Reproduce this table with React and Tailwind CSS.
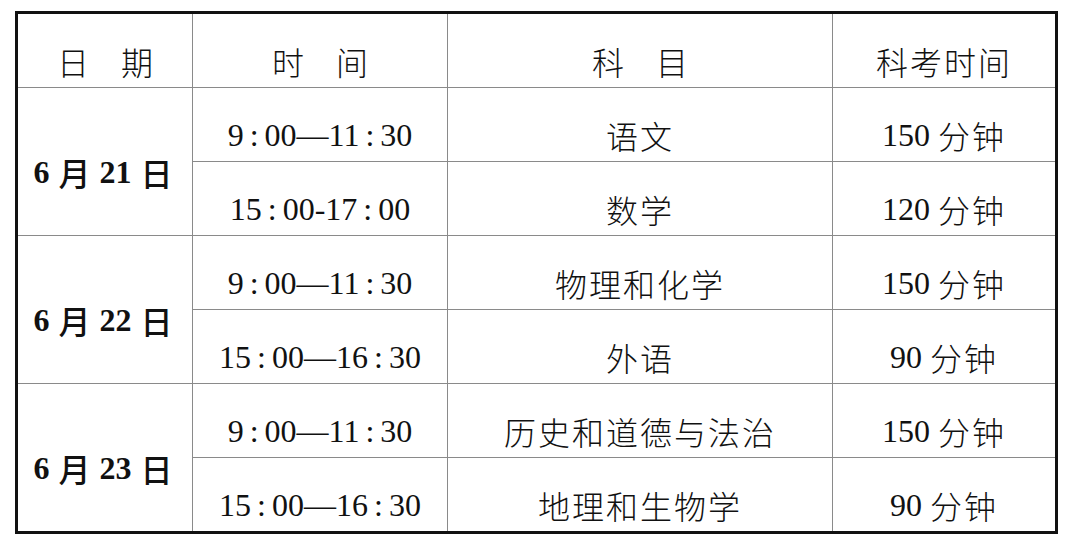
const SERIF = "font-['Liberation_Serif','Noto_Sans_CJK_SC',serif]";
const CJK = "font-['Noto_Sans_CJK_SC',sans-serif]";

const rows = [
  {
    day: '21',
    items: [
      { time: '9:00—11:30', subject: '语文', len: '150' },
      { time: '15:00-17:00', subject: '数学', len: '120' },
    ],
  },
  {
    day: '22',
    items: [
      { time: '9:00—11:30', subject: '物理和化学', len: '150' },
      { time: '15:00—16:30', subject: '外语', len: '90' },
    ],
  },
  {
    day: '23',
    items: [
      { time: '9:00—11:30', subject: '历史和道德与法治', len: '150' },
      { time: '15:00—16:30', subject: '地理和生物学', len: '90' },
    ],
  },
];

// 冒号在原图里比 Times 的宽，单独加点间距
function Time({ value }) {
  const parts = value.split(':');
  return (
    <span>
      {parts.map((p, i) => (
        <span key={i}>
          {i > 0 && <span className="mx-[6px]">:</span>}
          {p}
        </span>
      ))}
    </span>
  );
}

function Cell({ children, className = '' }) {
  return (
    <div className={`bg-white flex items-center justify-center pt-[20px] text-[32px] leading-none text-[#111] ${className}`}>
      {children}
    </div>
  );
}

export default function App() {
  return (
    <div className={`w-[1080px] h-[550px] bg-white pt-[11px] pl-[15px] ${SERIF}`}>
      <div className="w-[1043px] border-[3px] border-[#111] bg-[#8a8a8a] grid grid-cols-[174px_254px_384px_222px] grid-rows-[73px_repeat(6,73px)] gap-px">
        <Cell className={`${CJK} font-light`}>日　期</Cell>
        <Cell className={`${CJK} font-light`}>时　间</Cell>
        <Cell className={`${CJK} font-light`}>科　目</Cell>
        <Cell className={`${CJK} font-light tracking-[2px]`}>科考时间</Cell>
        {rows.map((r) => (
          <div key={r.day} className="contents">
            <Cell className="row-span-2 pr-[4px]">
              <span className="font-bold">6</span>
              <span className={`${CJK} font-medium mx-[9px]`}>月</span>
              <span className="font-bold">{r.day}</span>
              <span className={`${CJK} font-medium ml-[9px]`}>日</span>
            </Cell>
            {r.items.map((it) => (
              <div key={it.time + it.subject} className="contents">
                <Cell>
                  <Time value={it.time} />
                </Cell>
                <Cell className={`${CJK} font-light tracking-[2px]`}>{it.subject}</Cell>
                <Cell>
                  {it.len}
                  <span className={`ml-[8px] ${CJK} font-light tracking-[2px]`}>分钟</span>
                </Cell>
              </div>
            ))}
          </div>
        ))}
      </div>
    </div>
  );
}
